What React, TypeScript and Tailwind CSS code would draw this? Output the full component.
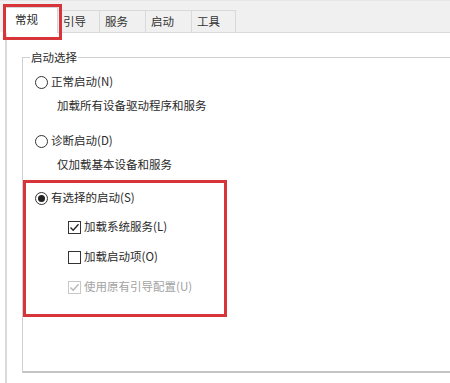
import React from "react";

const font = { fontFamily: '"Noto Sans CJK SC", "Liberation Sans", sans-serif' };

const tabs = [
    { label: "引导", w: "w-[42px]" },
    { label: "服务", w: "w-[46px]" },
    { label: "启动", w: "w-[46px]" },
    { label: "工具", w: "w-[44px]" },
];

const Radio = ({ checked }: { checked?: boolean }) => (
    <span className="w-[13px] h-[13px] rounded-full border border-[#333] bg-white flex items-center justify-center shrink-0">
        {checked && <span className="w-[7px] h-[7px] rounded-full bg-[#222]" />}
    </span>
);

const Check = ({ checked, disabled }: { checked?: boolean; disabled?: boolean }) => (
    <span
        className={`w-[13px] h-[13px] border ${disabled ? "border-[#c8c8c8]" : "border-[#333]"} bg-white flex items-center justify-center shrink-0`}
    >
        {checked && (
            <svg width="11" height="11" viewBox="0 0 11 11">
                <path
                    d="M1.5 5.5 L4.2 8.3 L9.5 2.2"
                    fill="none"
                    stroke={disabled ? "#b5b5b5" : "#222"}
                    strokeWidth="1.3"
                />
            </svg>
        )}
    </span>
);

export default function App() {
    return (
        <div className="relative w-[450px] h-[383px] overflow-hidden bg-white text-[11.5px] text-[#2a2a2a] flex flex-col" style={font}>
            {/* tab strip */}
            <div className="h-[32px] shrink-0 bg-[#f0f0f0] border-t border-[#e6e6e6] flex items-end pl-[5px]">
                <div className="w-[53px] h-[26px] bg-white border border-b-0 border-[#d6d6d6] flex items-center pl-[9px] pb-[2px] relative top-[1px] z-10">
                    常规
                </div>
                {tabs.map((t) => (
                    <div
                        key={t.label}
                        className={`${t.w} h-[22px] border-r border-t border-[#d9d9d9] flex items-center pl-[5px] text-[#333]`}
                    >
                        {t.label}
                    </div>
                ))}
            </div>

            {/* content panel */}
            <div className="flex-1 min-h-0 ml-[5px] border-l-2 border-t border-[#dadada] pl-[15px] pt-[24px] pb-[10px] flex flex-col">
                {/* group box */}
                <div className="w-[440px] flex-1 min-h-0 border border-[#cfcfcf] border-b-2 border-b-[#c4c4c4]">
                    <div className="-mt-[9px] ml-[7px] w-fit px-[1px] bg-white leading-[16px]">启动选择</div>

                    <div className="pt-[7px]">
                        <div className="pl-[12px] h-[20px] flex items-center gap-[3px]">
                            <Radio />
                            <span>正常启动(N)</span>
                        </div>
                        <div className="pl-[34px] h-[20px] mt-[4px] flex items-center">加载所有设备驱动程序和服务</div>

                        <div className="pl-[12px] h-[20px] mt-[15px] flex items-center gap-[3px]">
                            <Radio />
                            <span>诊断启动(D)</span>
                        </div>
                        <div className="pl-[34px] h-[20px] mt-[4px] flex items-center">仅加载基本设备和服务</div>

                        <div className="mt-[5px] w-[204px] border-[3px] border-[#d8353b] pt-[5px] pb-[17px]">
                            <div className="pl-[9px] h-[20px] flex items-center gap-[3px]">
                                <Radio checked />
                                <span>有选择的启动(S)</span>
                            </div>
                            <div className="pl-[42px] h-[20px] mt-[9px] flex items-center gap-[3px]">
                                <Check checked />
                                <span>加载系统服务(L)</span>
                            </div>
                            <div className="pl-[42px] h-[20px] mt-[10px] flex items-center gap-[3px]">
                                <Check />
                                <span>加载启动项(O)</span>
                            </div>
                            <div className="pl-[42px] h-[20px] mt-[10px] flex items-center gap-[3px] text-[#a3a3a3]">
                                <Check checked disabled />
                                <span>使用原有引导配置(U)</span>
                            </div>
                        </div>
                    </div>
                </div>
            </div>

            {/* highlight around selected tab */}
            <div className="absolute left-[3px] top-[4px] w-[59px] h-[36px] border-[3px] border-[#d8353b] z-20" />
        </div>
    );
}
